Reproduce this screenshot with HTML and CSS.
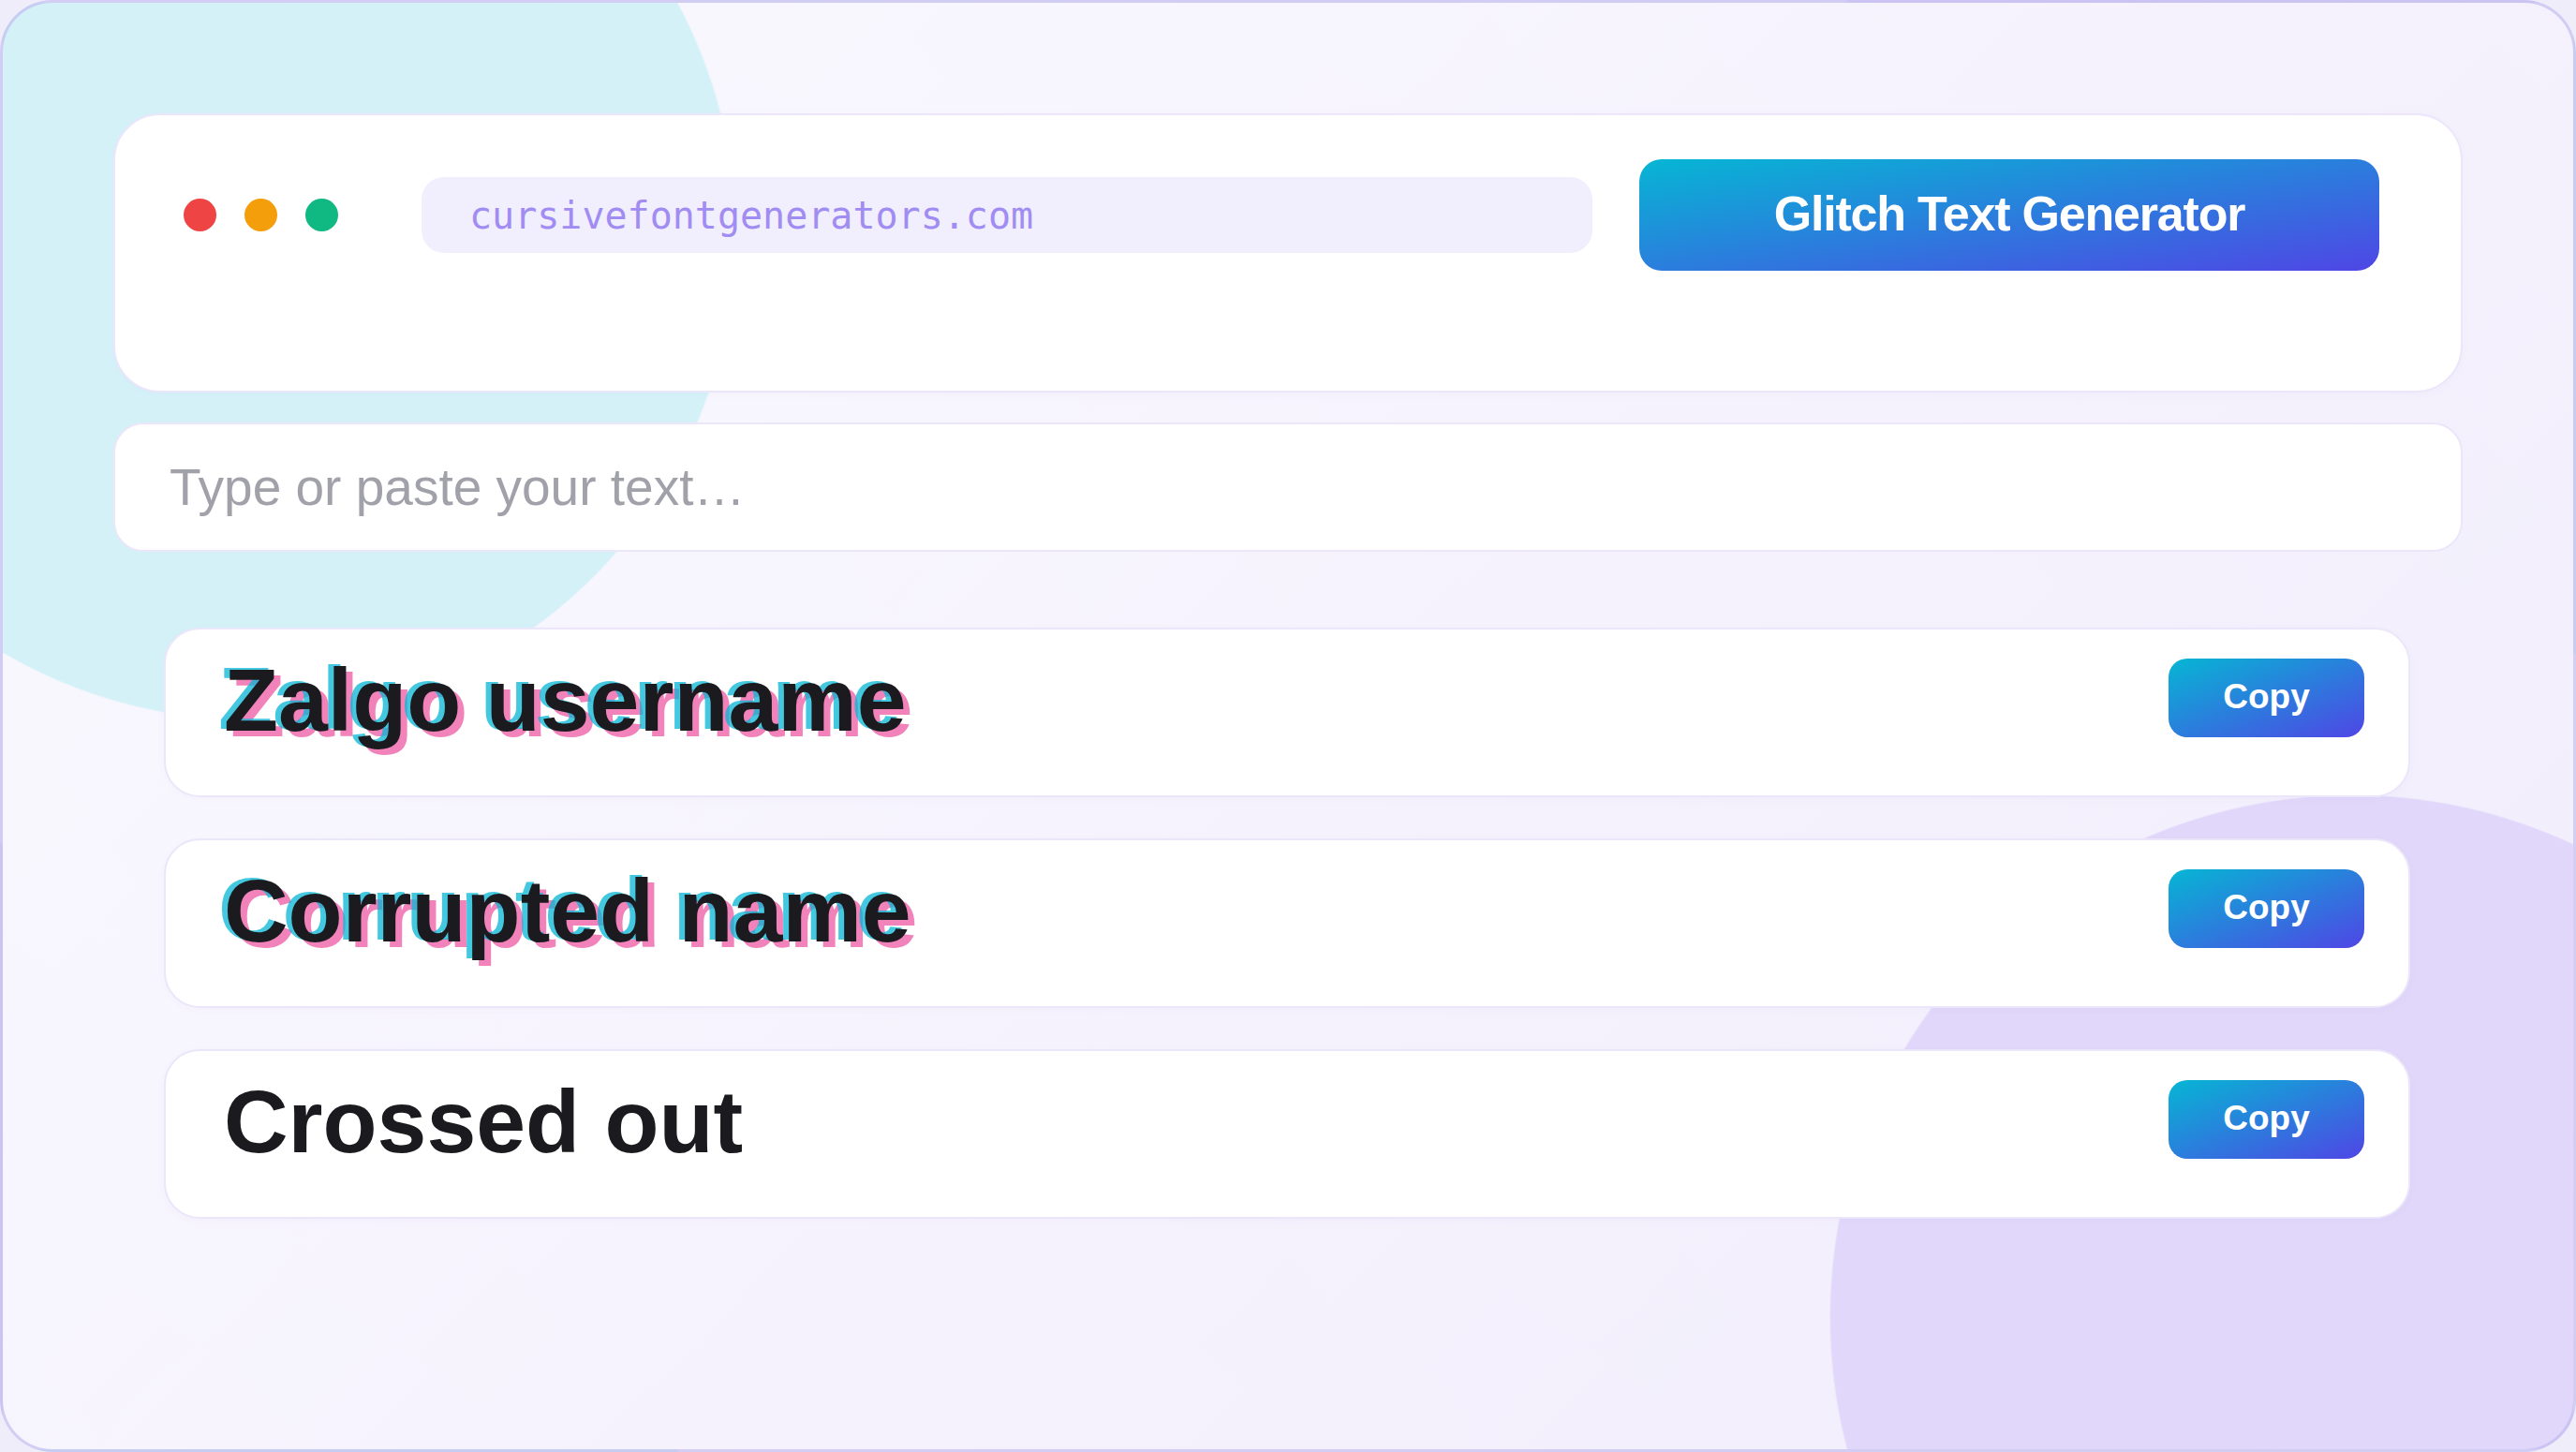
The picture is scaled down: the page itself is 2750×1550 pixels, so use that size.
FILE: index.html
```html
<!DOCTYPE html>
<html lang="en">
<head>
<meta charset="utf-8">
<title>Glitch Text Generator</title>
<link rel="stylesheet" href="styles.css">
</head>
<body>
<main class="page">
  <header class="browser">
    <div class="dots">
      <span class="dot dot-red"></span>
      <span class="dot dot-amber"></span>
      <span class="dot dot-green"></span>
    </div>
    <div class="address">cursivefontgenerators.com</div>
    <button class="cta" type="button">Glitch Text Generator</button>
  </header>

  <div class="entry">
    <input class="entry-input" type="text" placeholder="Type or paste your text…">
  </div>

  <ul class="results">
    <li class="result">
      <span class="result-text glitch">Zalgo username</span>
      <button class="copy" type="button">Copy</button>
    </li>
    <li class="result">
      <span class="result-text glitch">Corrupted name</span>
      <button class="copy" type="button">Copy</button>
    </li>
    <li class="result">
      <span class="result-text">Crossed out</span>
      <button class="copy" type="button">Copy</button>
    </li>
  </ul>
</main>
</body>
</html>
```

FILE: styles.css
```css
* {
  box-sizing: border-box;
}

html,
body {
  margin: 0;
  padding: 0;
  background: #f0edfa;
}

body {
  width: 2750px;
  height: 1550px;
  font-family: "Liberation Sans", Arial, Helvetica, sans-serif;
  color: #1b1b1f;
}

/* Canvas: soft lavender wash with a cyan blob top-left and a violet blob bottom-right */
.page {
  width: 2750px;
  height: 1550px;
  border: 3px solid rgba(190, 184, 238, 0.65);
  border-radius: 56px;
  padding: 118px 118px 0 118px;
  background:
    radial-gradient(circle 520px at 263px 246px, #d5f1f8 99.7%, rgba(213, 241, 248, 0) 100%),
    radial-gradient(circle 558px at 2508px 1403px, #e1d7fa 99.7%, rgba(225, 215, 250, 0) 100%),
    linear-gradient(135deg, #faf9fe 0%, #f5f2fd 55%, #f1edfc 100%);
  display: flex;
  flex-direction: column;
}

/* Browser chrome card */
.browser {
  display: flex;
  align-items: center;
  background: #ffffff;
  border: 2px solid #ebe6fa;
  border-radius: 50px;
  padding: 47px 87px 128px 73px;
  box-shadow: 0 2px 8px rgba(120, 100, 200, 0.03);
}

.dots {
  display: flex;
  gap: 30px;
  margin-right: 89px;
}

.dot {
  width: 35px;
  height: 35px;
  border-radius: 50%;
}

.dot-red { background: #ef4444; }
.dot-amber { background: #f59e0b; }
.dot-green { background: #10b981; }

.address {
  flex: 1;
  height: 81px;
  display: flex;
  align-items: center;
  padding-left: 51px;
  background: #f1eefd;
  border-radius: 24px;
  font-family: "DejaVu Sans Mono", "Liberation Mono", monospace;
  font-size: 40px;
  color: #a08cf2;
}

.cta {
  margin-left: 50px;
  width: 790px;
  height: 119px;
  border: 0;
  border-radius: 24px;
  background: linear-gradient(to bottom right, #06b6d4, #4f46e5);
  color: #ffffff;
  font-family: "Liberation Sans", Arial, Helvetica, sans-serif;
  font-weight: 700;
  font-size: 52px;
  letter-spacing: -1.2px;
  padding: 0 0 4px 0;
}

/* Text entry */
.entry {
  margin-top: 32px;
}

.entry-input {
  display: block;
  width: 100%;
  height: 138px;
  background: #ffffff;
  border: 2px solid #ebe6fa;
  border-radius: 32px;
  padding: 0 0 0 58px;
  font-family: "Liberation Sans", Arial, Helvetica, sans-serif;
  font-size: 55px;
  color: #1b1b1f;
  outline: none;
}

.entry-input::placeholder {
  color: #a1a1aa;
  opacity: 1;
}

/* Result rows */
.results {
  list-style: none;
  margin: 81px 56px 0 54px;
  padding: 0;
  display: flex;
  flex-direction: column;
  gap: 44px;
}

.result {
  height: 181px;
  display: flex;
  align-items: flex-start;
  justify-content: space-between;
  background: #ffffff;
  border: 2px solid #ebe6fa;
  border-radius: 38px;
  padding: 28px 47px 0 62px;
  box-shadow: 0 2px 8px rgba(120, 100, 200, 0.03);
}

.result-text {
  font-weight: 700;
  font-size: 95px;
  line-height: 94px;
  color: #1b1b1f;
  white-space: nowrap;
}

.glitch {
  text-shadow:
    -6px -2px 0 rgba(6, 182, 212, 0.75),
    7px 6px 0 rgba(236, 72, 153, 0.68);
}

.copy {
  margin-top: 3px;
  width: 209px;
  height: 84px;
  border: 0;
  border-radius: 20px;
  background: linear-gradient(to bottom right, #06b6d4, #4f46e5);
  color: #ffffff;
  font-family: "Liberation Sans", Arial, Helvetica, sans-serif;
  font-weight: 700;
  font-size: 37px;
  padding: 0 0 3px 0;
}
```
